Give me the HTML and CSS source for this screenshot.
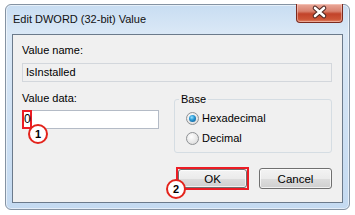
FILE: index.html
```html
<!DOCTYPE html>
<html>
  <head>
    <meta charset="utf-8" />
    <title>Edit DWORD (32-bit) Value</title>
    <link rel="stylesheet" href="styles.css">
  </head>
  <body>
    <div class="window">
      <div class="titlebar">
        <span class="title">Edit DWORD (32-bit) Value</span>
        <div class="close">
          <svg width="47" height="19" viewBox="0 0 47 19">
            <path d="M19 5 L28 13 M28 5 L19 13" stroke="#4a2520" stroke-width="4.6" stroke-linecap="round" fill="none" />
            <path d="M19 5 L28 13 M28 5 L19 13" stroke="#ffffff" stroke-width="2.6" stroke-linecap="round" fill="none" />
          </svg>
        </div>
      </div>

      <div class="client">
        <div class="label">Value name:</div>
        <div class="field readonly">IsInstalled</div>

        <div class="row">
          <div class="data-col">
            <div class="label">Value data:</div>
            <div class="field edit">
              <span class="mark">0<span class="badge badge-1">1</span></span>
            </div>
          </div>

          <div class="base">
            <div class="legend">Base</div>
            <div class="options">
              <label class="radio"><span class="dot checked"></span>Hexadecimal</label>
              <label class="radio"><span class="dot"></span>Decimal</label>
            </div>
          </div>
        </div>

        <div class="buttons">
          <div class="mark-btn">
            <button class="btn btn-ok">OK</button>
            <span class="badge badge-2">2</span>
          </div>
          <button class="btn">Cancel</button>
        </div>
      </div>
    </div>
  </body>
</html>
```

FILE: styles.css
```css
body {
  margin: 0;
  background: #ffffff;
  font-family: "Liberation Sans", Arial, sans-serif;
  font-size: 11px;
  color: #000;
}

.window {
  box-sizing: border-box;
  width: 345px;
  height: 206px;
  margin: 4px 0 0 5px;
  padding: 0 6px 6px 6px;
  border: 1px solid #8593a3;
  border-radius: 6px;
  background: linear-gradient(to bottom, #c8ddf2 0, #dae8f6 28px, #c4daf1 100%);
  box-shadow: inset 0 0 0 1px rgba(255, 255, 255, 0.55);
  display: flex;
  flex-direction: column;
}

.titlebar {
  height: 29px;
  display: flex;
  flex-shrink: 0;
}

.title {
  font-size: 11px;
  line-height: 13px;
  padding: 8px 0 0 1px;
  color: #111;
}

.close {
  margin-left: auto;
  margin-top: -1px;
  width: 47px;
  height: 19px;
  box-sizing: border-box;
  border: 1px solid #7b2a1e;
  border-top: none;
  border-radius: 0 0 4px 4px;
  background: linear-gradient(to bottom, #eaa99a 0, #d9826f 40%, #c2432a 55%, #cd5537 85%, #e0876a 100%);
  box-shadow: inset 0 0 0 1px rgba(255, 220, 210, 0.45);
}

.close svg {
  display: block;
  margin: -1px 0 0 -1px;
}

.client {
  flex: 1;
  box-sizing: border-box;
  display: flex;
  flex-direction: column;
  padding: 9px 10px 0 9px;
  border: 1px solid #6b7a8b;
  background: #f0f0f0;
}

.label {
  line-height: 13px;
}

.field {
  box-sizing: border-box;
  height: 19px;
  line-height: 17px;
  margin-top: 5px;
}

.readonly {
  margin-top: 6px;
  padding-left: 3px;
  border: 1px solid #d3d7dc;
  background: #f0f0f0;
}

.edit {
  width: 137px;
  border: 1px solid #b4bbc6;
  background: #ffffff;
  position: relative;
}

.mark {
  position: absolute;
  top: -1px;
  left: -1px;
  box-sizing: border-box;
  width: 10px;
  height: 19px;
  border: 2px solid #ec1c24;
  line-height: 15px;
  font-size: 12px;
  text-align: center;
}

.badge {
  position: absolute;
  box-sizing: border-box;
  width: 20px;
  height: 20px;
  border: 2px solid #e3231b;
  border-radius: 50%;
  background: #ffffff;
  font-weight: bold;
  font-size: 11px;
  line-height: 16px;
  text-align: center;
  color: #000;
}

.badge-1 {
  left: 4px;
  top: 12px;
}

.badge-2 {
  left: -12px;
  top: 10px;
}

.row {
  display: flex;
  margin-top: 10px;
}

.base {
  margin: 7px 0 0 auto;
  width: 158px;
  height: 54px;
  box-sizing: border-box;
  border: 1px solid #d5dde3;
  border-radius: 3px;
}

.legend {
  width: fit-content;
  margin: -7px 0 0 4px;
  padding: 0 2px;
  line-height: 13px;
  background: #f0f0f0;
}

.options {
  padding: 2px 0 0 11px;
}

.radio {
  display: flex;
  align-items: center;
  height: 20px;
}

.dot {
  position: relative;
  box-sizing: border-box;
  width: 13px;
  height: 13px;
  margin-right: 3px;
  border: 1px solid #8f9295;
  border-radius: 50%;
  background: radial-gradient(circle at 40% 35%, #ffffff 0, #e6e6e6 60%, #d0d0d0 100%);
}

.dot.checked::after {
  content: "";
  position: absolute;
  left: 2px;
  top: 2px;
  width: 7px;
  height: 7px;
  border-radius: 50%;
  background: radial-gradient(circle at 40% 35%, #9ae3ff 0, #2a9ad6 40%, #0b4d86 100%);
}

.buttons {
  display: flex;
  justify-content: flex-end;
  align-items: center;
  gap: 10px;
  margin-top: 14px;
}

.btn {
  box-sizing: border-box;
  width: 73px;
  height: 21px;
  padding: 0;
  border: 1px solid #707070;
  border-radius: 3px;
  background: linear-gradient(to bottom, #f3f3f3 0, #ebebeb 50%, #dddddd 51%, #cfcfcf 100%);
  box-shadow: inset 0 0 0 1px rgba(255, 255, 255, 0.7);
  font-family: "Liberation Sans", Arial, sans-serif;
  font-size: 11.5px;
  color: #000;
}

.mark-btn {
  position: relative;
  box-sizing: border-box;
  width: 73px;
  height: 23px;
  border: 2px solid #ec1c24;
  display: flex;
  justify-content: center;
  align-items: center;
}

.btn-ok {
  width: 69px;
  height: 19px;
}
```
